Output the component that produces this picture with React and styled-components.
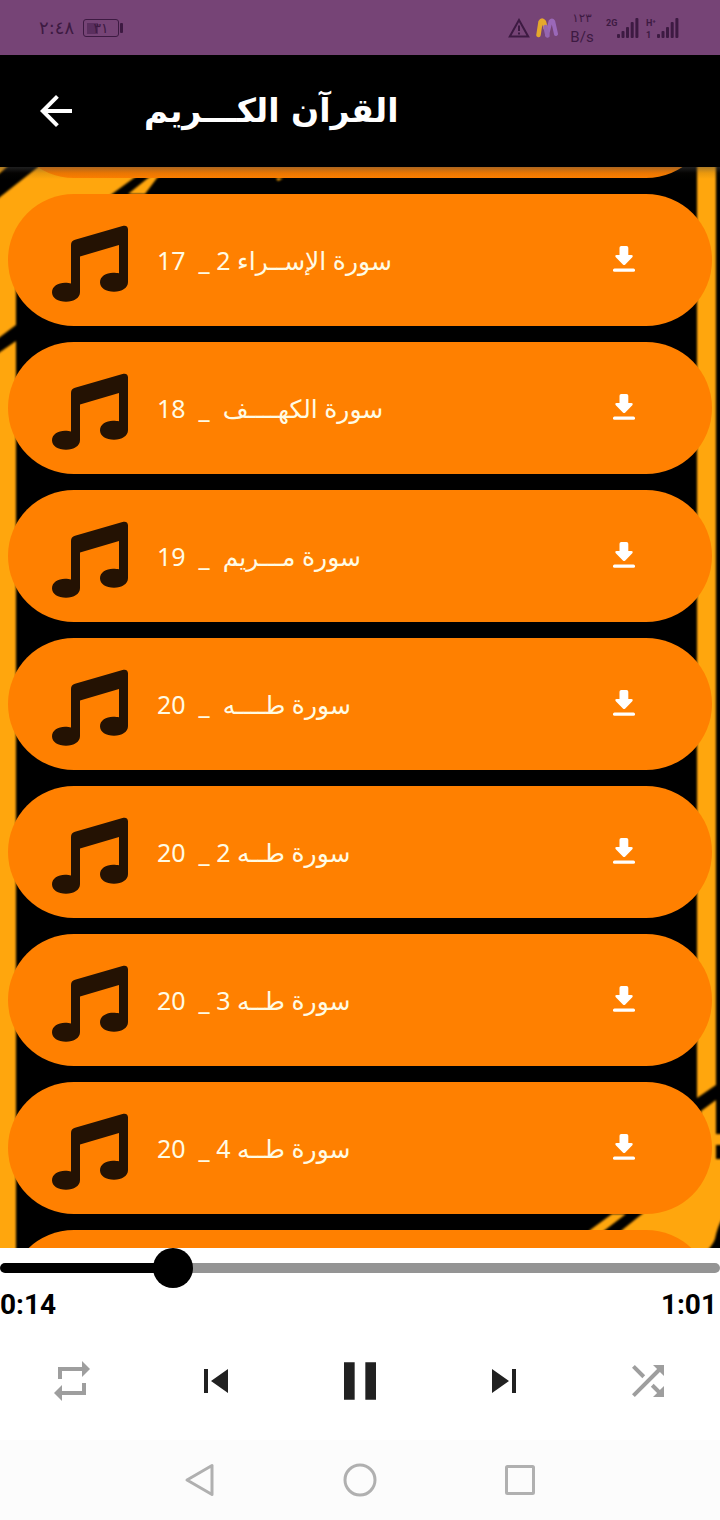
import React, { useLayoutEffect, useRef, useState } from 'react';
import styled, { createGlobalStyle } from 'styled-components';
import { MdArrowBack, MdPause, MdRepeat, MdShuffle, MdSkipNext, MdSkipPrevious } from 'react-icons/md';

const ink = '#3d1a42';

const GlobalStyle = createGlobalStyle`
  * { box-sizing: border-box; }
  body { margin: 0; background: #000; font-family: Roboto, 'DejaVu Sans', sans-serif; }
  button { border: 0; padding: 0; margin: 0; background: none; color: inherit; cursor: pointer; }
  svg { flex: none; }
`;

const Screen = styled.div`
  display: flex;
  flex-direction: column;
  height: 100vh;
  overflow: hidden;
`;

const StatusBar = styled.div`
  flex: none;
  height: 55px;
  padding: 0 41px 0 39px;
  display: flex;
  align-items: center;
  justify-content: space-between;
  background: #764476;
  color: ${ink};
`;

const StatusGroup = styled.div`
  display: flex;
  align-items: center;
  gap: ${(p) => p.$gap}px;
`;

const Clock = styled.span`
  font: 18px/20px 'DejaVu Sans', sans-serif;
`;

const Battery = styled.span`
  display: flex;
  align-items: center;
  gap: 1px;
  &::after {
    content: '';
    width: 3px;
    height: 10px;
    border-radius: 1px;
    background: ${ink};
  }
`;

const BatteryCell = styled.span`
  width: 36px;
  height: 18px;
  border: 1px solid ${ink};
  border-radius: 3px;
  text-align: center;
  font: 14px/16px 'DejaVu Sans', sans-serif;
  background: linear-gradient(#5b2f5f, #5b2f5f) 3px 3px / 11px 11px no-repeat;
`;

const Speed = styled.span`
  display: flex;
  flex-direction: column;
  align-items: center;
  width: 24px;
  font: 15px/20px Roboto, sans-serif;
  span { font: 12px/18px 'DejaVu Sans', sans-serif; }
`;

const SignalBox = styled.span`
  display: flex;
  align-items: flex-start;
  height: 22px;
`;

const SignalLabel = styled.span`
  display: flex;
  flex-direction: column;
  width: 11px;
  font: 700 9px/12px Roboto, sans-serif;
`;

const AppBar = styled.header`
  flex: none;
  height: 112px;
  padding: 0 32px;
  display: flex;
  align-items: center;
  gap: 64px;
  background: #000;
  color: #fff;
`;

const IconButton = styled.button`
  display: flex;
  align-items: center;
  justify-content: center;
  width: ${(p) => p.$size || 48}px;
  height: ${(p) => p.$size || 48}px;
  flex: none;
`;

const Title = styled.h1`
  margin: 0;
  font: 700 33px/48px 'DejaVu Sans', sans-serif;
  white-space: nowrap;
`;

const ListArea = styled.main`
  position: relative;
  flex: 1;
  min-height: 0;
  background: #000;
`;

const Backdrop = styled.svg`
  position: absolute;
  inset: 0;
  width: 100%;
  height: 100%;
`;

const Shade = styled.div`
  position: absolute;
  top: 0;
  left: 0;
  right: 0;
  height: 12px;
  background: linear-gradient(rgba(70, 70, 70, 0.45), rgba(40, 30, 20, 0.1) 50%, rgba(40, 30, 20, 0));
  pointer-events: none;
`;

const TrackList = styled.ul`
  position: relative;
  height: 100%;
  margin: 0;
  padding: 0 8px;
  list-style: none;
  display: flex;
  flex-direction: column;
  gap: 16px;
  overflow-y: auto;
  scrollbar-width: none;
`;

const TrackCard = styled.li`
  flex: none;
  height: 132px;
  padding: 0 64px 0 44px;
  border-radius: 66px;
  display: flex;
  align-items: center;
  gap: 29px;
  background: #ff8000;
  color: #fffbe4;
`;

const TrackName = styled.span`
  flex: 1;
  white-space: pre;
  font: 25px/40px 'Noto Sans', 'DejaVu Sans', sans-serif;
`;

const Player = styled.section`
  flex: none;
  background: #fff;
  color: #212121;
`;

const SeekWrap = styled.div`
  position: relative;
  &::before {
    content: '';
    position: absolute;
    inset: 15px 0;
    border-radius: 5px;
    background: linear-gradient(to right, #000 24%, #949494 24%);
  }
`;

const Seek = styled.input`
  position: relative;
  display: block;
  width: 100%;
  height: 40px;
  margin: 0;
  appearance: none;
  background: none;
  &::-webkit-slider-runnable-track { height: 40px; }
  &::-webkit-slider-thumb {
    appearance: none;
    width: 40px;
    height: 40px;
    border-radius: 50%;
    background: #000;
  }
`;

const Times = styled.div`
  display: flex;
  justify-content: space-between;
  padding: 0 3px 0 0;
  font: 700 28px/34px Roboto, sans-serif;
  color: #000;
`;

const Controls = styled.div`
  display: grid;
  grid-template-columns: repeat(5, 1fr);
  justify-items: center;
  align-items: center;
  height: 118px;
`;

const ControlButton = styled(IconButton)`
  color: ${(p) => (p.$muted ? '#9e9e9e' : '#212121')};
`;

const SystemNav = styled.nav`
  flex: none;
  height: 80px;
  padding: 0 16.666%;
  display: grid;
  grid-template-columns: repeat(3, 1fr);
  justify-items: center;
  align-items: center;
  background: #fcfcfc;
  svg { fill: none; stroke: #b0b0b0; stroke-width: 3; stroke-linejoin: round; }
`;

const tracks = [
  '17  _ سورة الإســراء 2',
  '18  _  سورة الكهــــف',
  '19  _  سورة مـــريم',
  '20  _  سورة طــــه',
  '20  _ سورة طــه 2',
  '20  _ سورة طــه 3',
  '20  _ سورة طــه 4',
];

const NoteIcon = () => (
  <svg width="76" height="86" viewBox="0 -8 76 86" fill="#241203" aria-hidden="true">
    <path d="M19 20c0-3 1.500-4.500 4-5.300L70.500 1C74 0 76 1.500 76 4.500V57c0 6-6 9.700-14 9.700s-14-3.700-14-9.500 6-9.500 13-9.500c2.500 0 4.500.2 6 .6V20L28 31.500V67c0 6-6 9.700-14 9.700S0 73 0 67.200s6-9.500 13-9.500c2.500 0 4.500.3 6 .8z" />
  </svg>
);

const DownloadIcon = () => (
  <svg width="22" height="30" viewBox="0 0 22 30" fill="#fff" aria-hidden="true">
    <path d="M8.300 1h5.200q1.800 0 1.800 1.800V10h3q2.300.3 1 2.200l-7 7.400q-1.200 1-2.400 0L2.800 12.200Q1.400 10.300 3.600 10h2.900V2.800Q6.500 1 8.300 1z" />
    <rect x="0" y="23.500" width="22" height="3.300" rx="1.500" />
  </svg>
);

const Signal = ({ top, bottom }) => (
  <SignalBox>
    <SignalLabel>
      <span>{top}</span>
      <span>{bottom}</span>
    </SignalLabel>
    <svg width="22" height="22" viewBox="0 0 22 22" fill={ink} aria-hidden="true">
      <rect x="0" y="17" width="3" height="4" rx="1" />
      <rect x="4.500" y="14" width="3" height="7" rx="1" />
      <rect x="9" y="10" width="3" height="11" rx="1" />
      <rect x="13.700" y="5" width="3" height="16" rx="1" />
      <rect x="18.400" y="1" width="3" height="20" rx="1" />
    </svg>
  </SignalBox>
);

const Stripes = () => (
  <Backdrop viewBox="0 0 720 1081" preserveAspectRatio="none" aria-hidden="true">
    <defs>
      <filter id="soft" x="-5%" y="-5%" width="110%" height="110%">
        <feGaussianBlur stdDeviation="1" />
      </filter>
    </defs>
    <g fill="#ffa60a" filter="url(#soft)">
      <path d="M-10-10H18L0 6l-10 7z" />
      <path d="M-10 39L0 30 38 0 50-10H165L134 11 112 27 16 120V158L0 170l-10 7z" />
      <path d="M128 27L148 11 175-10H190L157 11 145 27z" />
      <path d="M276 11h7l-5 3z" />
      <path d="M-10 193L0 185 16 174V1091H-10z" />
      <path d="M697-10H716V918L697 931z" />
      <path d="M701 944L716 933V967H730V978H716V992H730V1040Q718 1055 715 1072 712 1080 700 1091H600L622 1063 642 1047 700 990z" />
      <path d="M590 1063L612 1047H626L605 1063 575 1085z" />
    </g>
  </Backdrop>
);

export default function App() {
  const list = useRef(null);
  const [position, setPosition] = useState(13.7);

  // Open the list with the end of the previous card showing under the header.
  useLayoutEffect(() => {
    list.current.scrollTop = 121;
  }, []);

  return (
    <Screen>
      <GlobalStyle />
      <StatusBar>
        <StatusGroup $gap={9}>
          <Clock>٢:٤٨</Clock>
          <Battery>
            <BatteryCell>٣١</BatteryCell>
          </Battery>
        </StatusGroup>
        <StatusGroup $gap={12}>
          <StatusGroup $gap={6}>
            <svg width="22" height="20" viewBox="0 0 22 20" fill="none" stroke={ink} strokeWidth="2" aria-hidden="true">
              <path d="M11 2L20.200 18.500H1.800z M11 7.500v5.500 M11 14.500v2" />
            </svg>
            <svg width="22" height="22" viewBox="0 0 22 22" fill="none" strokeLinecap="round" strokeLinejoin="round" aria-hidden="true">
              <path d="M11 18L14.500 4.500q1.500-2 2.700 0L20 17" stroke="#9a68b8" strokeWidth="4" />
              <path d="M2.500 18L4.500 5q1.500-3 3.500 0l1.500 6" stroke="#e5a92c" strokeWidth="4.500" />
              <path d="M9.500 10l2 8.500" stroke="#9566b0" strokeWidth="4.500" />
            </svg>
          </StatusGroup>
          <Speed>
            <span>١٢٣</span>
            B/s
          </Speed>
          <StatusGroup $gap={7}>
            <Signal top="2G" bottom="" />
            <Signal top="H⁺" bottom="1" />
          </StatusGroup>
        </StatusGroup>
      </StatusBar>

      <AppBar>
        <IconButton aria-label="رجوع">
          <MdArrowBack size={48} />
        </IconButton>
        <Title>القرآن الكـــريم</Title>
      </AppBar>

      <ListArea>
        <Stripes />
        <TrackList ref={list}>
          <TrackCard aria-hidden="true" />
          {tracks.map((name) => (
            <TrackCard key={name}>
              <NoteIcon />
              <TrackName>{name}</TrackName>
              <IconButton aria-label="تنزيل">
                <DownloadIcon />
              </IconButton>
            </TrackCard>
          ))}
          <TrackCard aria-hidden="true" />
        </TrackList>
        <Shade />
      </ListArea>

      <Player>
        <SeekWrap>
          <Seek
            type="range"
            aria-label="الموضع"
            min="0"
            max="61"
            step="0.1"
            value={position}
            onChange={(e) => setPosition(Number(e.target.value))}
          />
        </SeekWrap>
        <Times>
          <span>0:14</span>
          <span>1:01</span>
        </Times>
        <Controls>
          <ControlButton $muted aria-label="تكرار">
            <MdRepeat size={48} />
          </ControlButton>
          <ControlButton aria-label="السابق">
            <MdSkipPrevious size={48} />
          </ControlButton>
          <ControlButton $size={64} aria-label="إيقاف مؤقت">
            <MdPause size={64} />
          </ControlButton>
          <ControlButton aria-label="التالي">
            <MdSkipNext size={48} />
          </ControlButton>
          <ControlButton $muted aria-label="عشوائي">
            <MdShuffle size={48} />
          </ControlButton>
        </Controls>
      </Player>

      <SystemNav>
        <IconButton aria-label="Back">
          <svg width="32" height="34" viewBox="0 0 32 34">
            <path d="M28 2.500V31.500L3 17z" />
          </svg>
        </IconButton>
        <IconButton aria-label="Home">
          <svg width="34" height="34" viewBox="0 0 34 34">
            <circle cx="17" cy="17" r="15" />
          </svg>
        </IconButton>
        <IconButton aria-label="Recents">
          <svg width="30" height="30" viewBox="0 0 30 30">
            <rect x="1.500" y="1.500" width="27" height="27" rx="1" />
          </svg>
        </IconButton>
      </SystemNav>
    </Screen>
  );
}
